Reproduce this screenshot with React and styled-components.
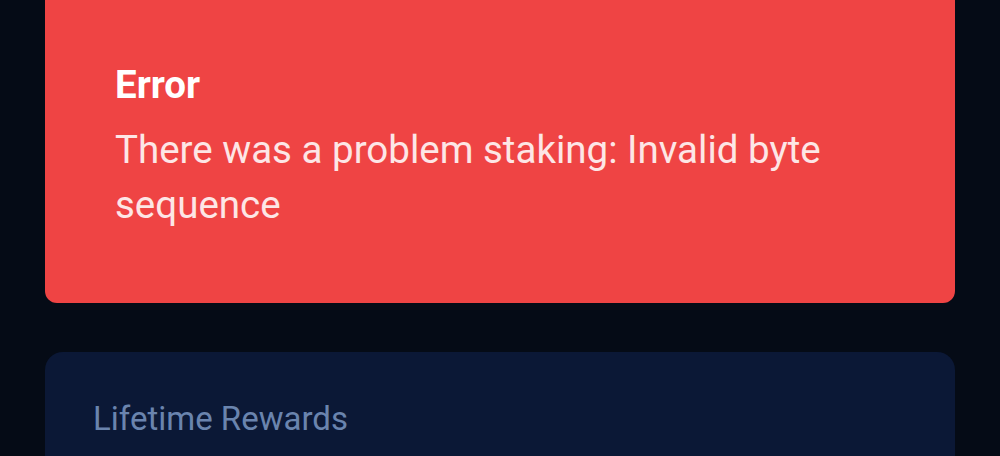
import React from 'react';
import styled, { createGlobalStyle } from 'styled-components';

const GlobalStyle = createGlobalStyle`
  html, body {
    margin: 0;
    padding: 0;
    background: #050b16;
    font-family: Roboto, "Liberation Sans", sans-serif;
  }
`;

function App() {
  return (
    <>
      <GlobalStyle />
      <Page>
        <ErrorCard role="alert">
          <ErrorTitle>Error</ErrorTitle>
          <ErrorMessage>There was a problem staking: Invalid byte sequence</ErrorMessage>
        </ErrorCard>
        <RewardsCard>
          <RewardsLabel>Lifetime Rewards</RewardsLabel>
        </RewardsCard>
      </Page>
    </>
  );
}

const Page = styled.main`
  display: flex;
  flex-direction: column;
  gap: 49px;
  padding: 0 45px 0 45px;
  height: 456px;
  overflow: hidden;
`;

const ErrorCard = styled.section`
  display: flex;
  flex-direction: column;
  margin-top: -20px;
  padding: 82px 70px 71px;
  background: #ef4444;
  border-radius: 0 0 12px 12px;
  color: #ffffff;
`;

const ErrorTitle = styled.h2`
  margin: 0;
  font-size: 38.5px;
  font-weight: 700;
  line-height: 46px;
`;

const ErrorMessage = styled.p`
  margin: 14px 0 0;
  font-size: 38.5px;
  font-weight: 400;
  line-height: 55px;
  color: #fde6e6;
`;

const RewardsCard = styled.section`
  flex: 1;
  padding: 47px 48px;
  background: #0b1836;
  border-radius: 18px 18px 0 0;
`;

const RewardsLabel = styled.h3`
  margin: 0;
  font-size: 33px;
  font-weight: 400;
  line-height: 40px;
  color: #6a84ae;
`;

export default App;
